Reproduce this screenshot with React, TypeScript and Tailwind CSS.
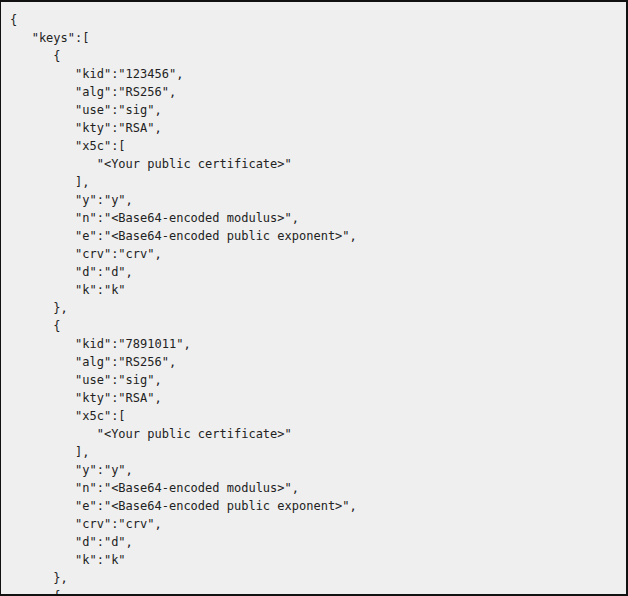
const json = `{
   "keys":[
      {
         "kid":"123456",
         "alg":"RS256",
         "use":"sig",
         "kty":"RSA",
         "x5c":[
            "<Your public certificate>"
         ],
         "y":"y",
         "n":"<Base64-encoded modulus>",
         "e":"<Base64-encoded public exponent>",
         "crv":"crv",
         "d":"d",
         "k":"k"
      },
      {
         "kid":"7891011",
         "alg":"RS256",
         "use":"sig",
         "kty":"RSA",
         "x5c":[
            "<Your public certificate>"
         ],
         "y":"y",
         "n":"<Base64-encoded modulus>",
         "e":"<Base64-encoded public exponent>",
         "crv":"crv",
         "d":"d",
         "k":"k"
      },
      {
         "kid":"121314",
         "alg":"RS256"
      }
   ]
}`

export default function App() {
  return (
    <div className="h-[596px] w-[628px] overflow-hidden border-t-2 border-r-2 border-b-2 border-l border-[#111] bg-[#efefef]">
      <pre className="m-0 pl-[9px] pt-[9px] font-['DejaVu_Sans_Mono',monospace] text-[12px] leading-[18px] text-[#222]">
        {json}
      </pre>
    </div>
  )
}
